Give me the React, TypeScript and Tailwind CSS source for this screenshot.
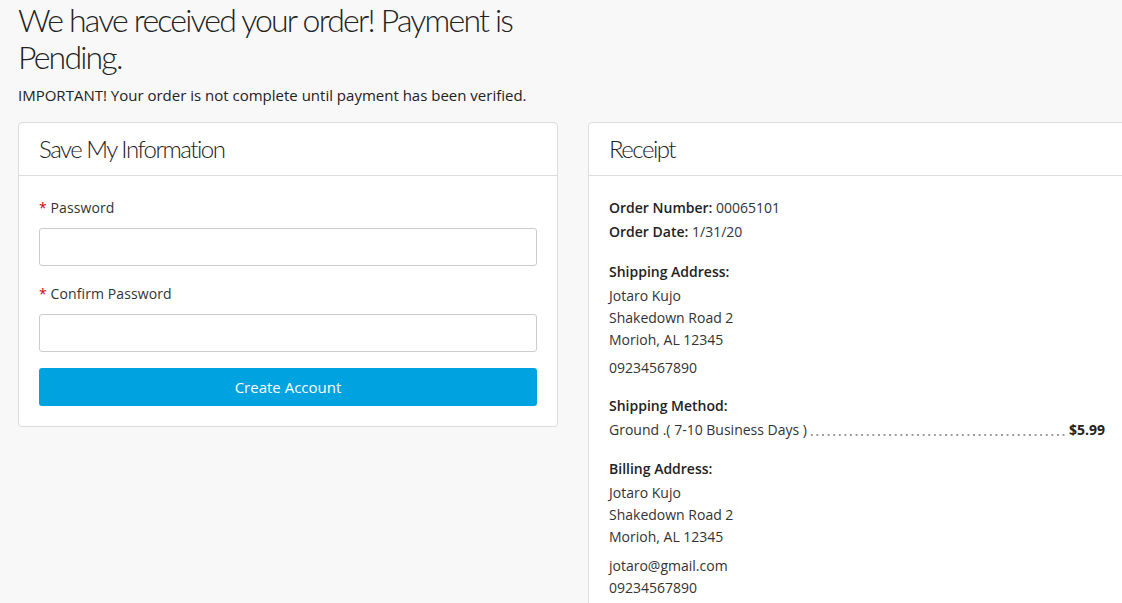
import React from "react";

const body = { fontFamily: '"Open Sans", "Noto Sans", sans-serif' };
const head = { fontFamily: 'Lato, "Open Sans", sans-serif' };

function Card({ title, children, className }: { title: string; children: React.ReactNode; className?: string }) {
  return (
    <div className={"shrink-0 w-[540px] bg-white border border-[#dddddd] rounded-[4px] " + (className ?? "")}>
      <div className="h-[53px] border-b border-[#dddddd] px-[20px] flex items-center">
        <h2 className="text-[24px] font-light text-[#222] tracking-[-1.5px] leading-none" style={head}>
          {title}
        </h2>
      </div>
      {children}
    </div>
  );
}

function Field({ label, first }: { label: string; first?: boolean }) {
  return (
    <div className={first ? "" : "mt-[18px]"}>
      <div className="text-[14px] leading-[20px] text-[#333] tracking-[0.1px]">
        <span className="text-[#cc0000]">*</span> {label}
      </div>
      <input
        type="password"
        className="mt-[10px] block w-full h-[38px] border border-[#cccccc] rounded-[3px] bg-white outline-none"
      />
    </div>
  );
}

export default function App() {
  return (
    <div className="w-[1122px] h-[603px] overflow-hidden bg-[#f8f8f8] text-[#333]" style={body}>
      <div className="pl-[18px]">
        <h1
          className="text-[32px] font-light leading-[37px] text-[#222] tracking-[-1.8px] pt-[1px]"
          style={head}
        >
          <span className="whitespace-nowrap">We have received your order! Payment is</span>
          <br />
          Pending.
        </h1>
        <p className="mt-[10px] text-[15px] leading-[20px] text-[#222]">
          IMPORTANT! Your order is not complete until payment has been verified.
        </p>
        <div className="mt-[17px] flex gap-[30px] items-start">
          <Card title="Save My Information">
            <div className="px-[20px] pt-[22px] pb-[20px]">
              <Field label="Password" first />
              <Field label="Confirm Password" />
              <button className="mt-[16px] w-full h-[38px] rounded-[3px] bg-[#00a2e0] text-white text-[15px]">
                Create Account
              </button>
            </div>
          </Card>
          <Card title="Receipt">
            <div className="px-[20px] pt-[21px] pb-[20px] text-[14px] leading-[22px] text-[#333]">
              <div>
                <b className="font-semibold text-[#222]">Order Number:</b> 00065101
              </div>
              <div className="mt-[2px]">
                <b className="font-semibold text-[#222]">Order Date:</b> 1/31/20
              </div>

              <div className="mt-[18px] font-semibold text-[#222]">Shipping Address:</div>
              <div className="mt-[2px]">Jotaro Kujo</div>
              <div>Shakedown Road 2</div>
              <div>Morioh, AL 12345</div>
              <div className="mt-[6px]">09234567890</div>

              <div className="mt-[16px] font-semibold text-[#222]">Shipping Method:</div>
              <div className="mt-[2px] mr-[2px] flex items-baseline">
                <span className="whitespace-nowrap">Ground .( 7-10 Business Days )</span>
                <span className="flex-1 self-end mb-[5px] mx-[2px] h-[2px] bg-[radial-gradient(circle,#999_0.8px,transparent_1.1px)] bg-[length:5.6px_2px] bg-repeat-x" />
                <b className="font-bold text-[#222]">$5.99</b>
              </div>

              <div className="mt-[17px] font-semibold text-[#222]">Billing Address:</div>
              <div className="mt-[2px]">Jotaro Kujo</div>
              <div>Shakedown Road 2</div>
              <div>Morioh, AL 12345</div>
              <div className="mt-[7px]">jotaro@gmail.com</div>
              <div>09234567890</div>
            </div>
          </Card>
        </div>
      </div>
    </div>
  );
}
